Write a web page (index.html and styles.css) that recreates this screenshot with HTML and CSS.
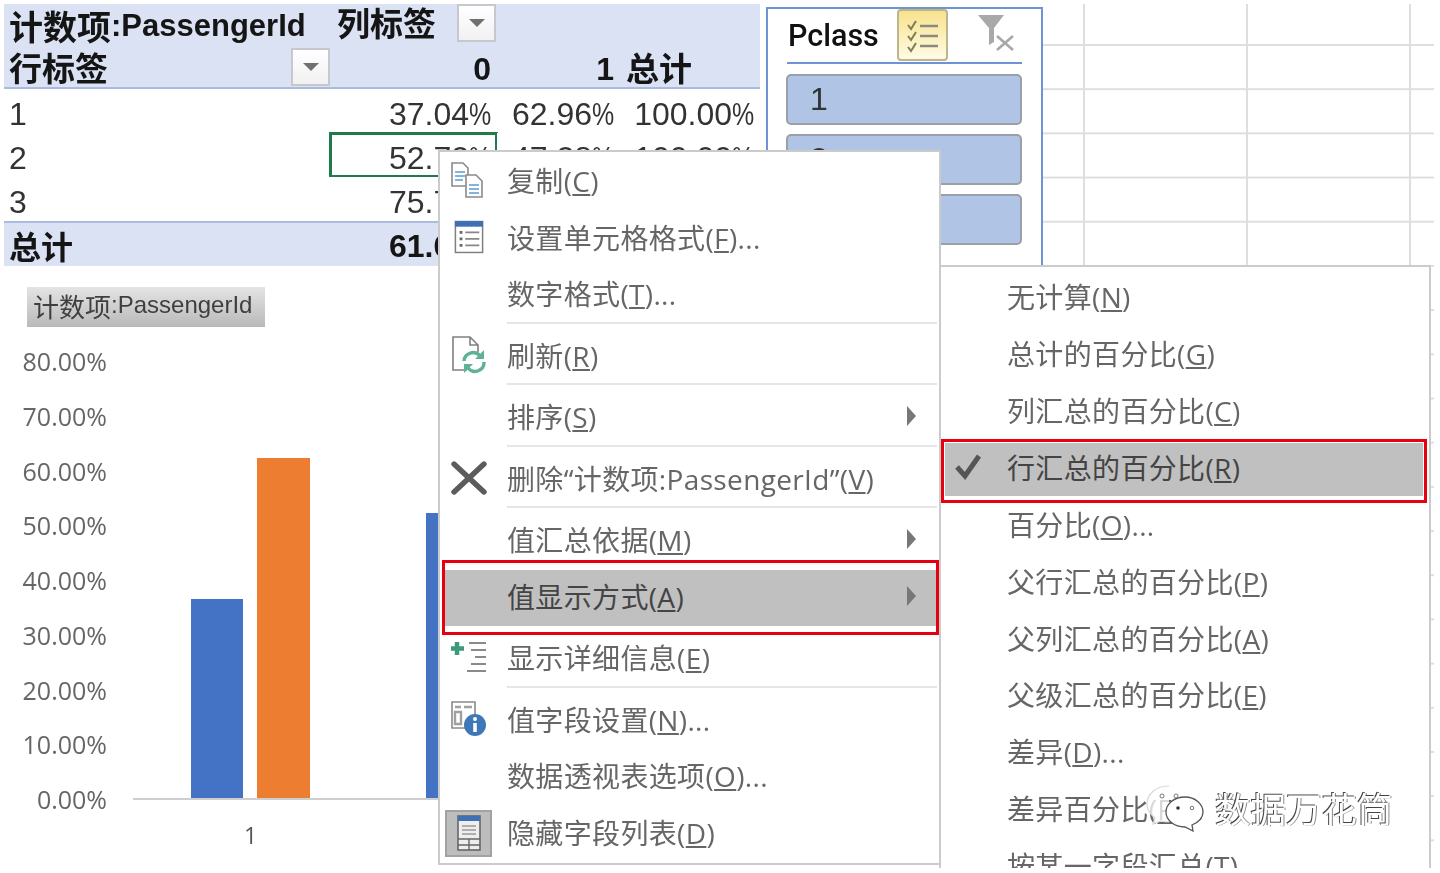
FILE: index.html
```html
<!DOCTYPE html>
<html lang="zh-CN">
<head>
<meta charset="utf-8">
<title>数据透视表 值显示方式</title>
<link rel="stylesheet" href="styles.css">
</head>
<body>
<div class="stage">
  <div class="left">
    <div class="pivot">
      <div class="cell head field"><span class="cjk34">计数项</span>:PassengerId</div>
      <div class="cell head label-cell"><span>列标签</span><span class="drop"><i></i></span></div>
      <div class="cell head"></div>
      <div class="cell head"></div>

      <div class="cell head label-cell rowlabel"><span>行标签</span><span class="drop"><i></i></span></div>
      <div class="cell head num">0</div>
      <div class="cell head num">1</div>
      <div class="cell head total-h">总计</div>

      <div class="cell data">1</div>
      <div class="cell data num">37.04<span class="pct">%</span></div>
      <div class="cell data num">62.96<span class="pct">%</span></div>
      <div class="cell data num">100.00<span class="pct">%</span></div>

      <div class="cell data">2</div>
      <div class="cell data num selected">52.72<span class="pct">%</span></div>
      <div class="cell data num">47.28<span class="pct">%</span></div>
      <div class="cell data num">100.00<span class="pct">%</span></div>

      <div class="cell data">3</div>
      <div class="cell data num">75.76<span class="pct">%</span></div>
      <div class="cell data num">24.24<span class="pct">%</span></div>
      <div class="cell data num">100.00<span class="pct">%</span></div>

      <div class="cell data sum sum-label">总计</div>
      <div class="cell data sum num">61.62<span class="pct">%</span></div>
      <div class="cell data sum num">38.38<span class="pct">%</span></div>
      <div class="cell data sum num">100.00<span class="pct">%</span></div>
    </div>

    <div class="chart">
      <div class="chart-field"><span class="cjk26">计数项</span>:PassengerId</div>
      <div class="chart-body">
        <div class="y-axis">
          <span>80.00%</span><span>70.00%</span><span>60.00%</span><span>50.00%</span><span>40.00%</span><span>30.00%</span><span>20.00%</span><span>10.00%</span><span>0.00%</span>
        </div>
        <div class="plot-wrap">
          <div class="plot">
            <div class="group">
              <div class="bar blue" style="height:199px"></div>
              <div class="bar orange" style="height:340px"></div>
            </div>
            <div class="group">
              <div class="bar blue" style="height:285px"></div>
              <div class="bar orange" style="height:255px"></div>
            </div>
          </div>
          <div class="cats"><span>1</span><span>2</span></div>
        </div>
      </div>
    </div>
  </div>

  <div class="slicer">
    <div class="slicer-head">
      <span class="slicer-title">Pclass</span>
      <span class="multi">
        <svg width="36" height="36" viewBox="0 0 36 36" fill="none">
          <path d="M3 8l3 4 5-8M3 19l3 4 5-8M3 30l3 4 5-8" stroke="#7d7d58" stroke-width="2"/>
          <path d="M15 9h18M15 19h18M15 29h18" stroke="#8a8a80" stroke-width="2.4"/>
        </svg>
      </span>
      <span class="clear">
        <svg width="40" height="38" viewBox="0 0 40 38" fill="none">
          <path d="M1 1h26L17 14v14l-5 3V14z" fill="#a9a9a9"/>
          <path d="M20 22l16 14M36 22L20 36" stroke="#a8a8a8" stroke-width="2.6"/>
        </svg>
      </span>
    </div>
    <div class="slicer-item">1</div>
    <div class="slicer-item">2</div>
    <div class="slicer-item">3</div>
  </div>

  <div class="cells"></div>

  <div class="menu main-menu">
    <div class="item"><span class="ico">
      <svg width="34" height="36" viewBox="0 0 34 36" fill="none">
        <path d="M1 1h11l5 5v18H1z" fill="#fff" stroke="#8a8a8a" stroke-width="1.6"/>
        <path d="M4 10h10M4 14h10M4 18h8" stroke="#5b9bd5" stroke-width="1.6"/>
        <path d="M15 13h10l6 6v16H15z" fill="#fff" stroke="#8a8a8a" stroke-width="1.6"/>
        <path d="M18 23h10M18 27h10M18 31h10" stroke="#5b9bd5" stroke-width="1.6"/>
      </svg>
    </span><span>复制(<u>C</u>)</span></div>
    <div class="item"><span class="ico">
      <svg class="fmt" width="30" height="36" viewBox="0 0 32 36" fill="none">
        <rect x="1.5" y="1.5" width="29" height="33" fill="#fff" stroke="#808080" stroke-width="1.6"/>
        <rect x="1" y="1" width="30" height="6" fill="#3f6fb5"/>
        <path d="M6 13h3M6 20h3M6 27h3" stroke="#666" stroke-width="3"/>
        <path d="M12 13h15M12 20h15M12 27h15" stroke="#888" stroke-width="1.8"/>
      </svg>
    </span><span>设置单元格格式(<u>F</u>)...</span></div>
    <div class="item"><span class="ico"></span><span>数字格式(<u>T</u>)...</span></div>
    <div class="sep"></div>
    <div class="item"><span class="ico">
      <svg width="36" height="38" viewBox="0 0 36 38" fill="none">
        <path d="M16 34H2V1h17l8 8v7M19 1v8h8" stroke="#808080" stroke-width="1.6"/>
        <path d="M13 25a9 9 0 0 1 16-5l2 2M33 26a9 9 0 0 1-16 6l-2-2" stroke="#5fb295" stroke-width="3.4"/>
        <path d="M33 14v9h-9zM13 37v-9h9z" fill="#5fb295"/>
      </svg>
    </span><span>刷新(<u>R</u>)</span></div>
    <div class="sep"></div>
    <div class="item"><span class="ico"></span><span>排序(<u>S</u>)</span><i class="tri"></i></div>
    <div class="sep"></div>
    <div class="item"><span class="ico">
      <svg width="36" height="34" viewBox="0 0 36 34" fill="none">
        <path d="M3 3l30 28M33 3L3 31" stroke="#5c5c5c" stroke-width="5.4" stroke-linecap="round"/>
      </svg>
    </span><span>删除“计数项:PassengerId”(<u>V</u>)</span></div>
    <div class="sep"></div>
    <div class="item"><span class="ico"></span><span>值汇总依据(<u>M</u>)</span><i class="tri"></i></div>
    <div class="item hot"><span class="ico"></span><span>值显示方式(<u>A</u>)</span><i class="tri"></i></div>
    <div class="sep"></div>
    <div class="item"><span class="ico">
      <svg width="36" height="32" viewBox="0 0 36 32" fill="none">
        <path d="M6 1v13M0 7.500h13" stroke="#3d9a78" stroke-width="4.500"/>
        <path d="M18 2h17M20 9h15M24 16h11M20 23h15M16 30h19" stroke="#8a8a8a" stroke-width="2"/>
      </svg>
    </span><span>显示详细信息(<u>E</u>)</span></div>
    <div class="sep"></div>
    <div class="item"><span class="ico">
      <svg width="36" height="36" viewBox="0 0 36 36" fill="none">
        <path d="M24 22V1H1v26h14" stroke="#8a8a8a" stroke-width="1.6"/>
        <path d="M4 6h6M13 6h8M4 11h6v12H4z" stroke="#a0a0a0" stroke-width="2.4"/>
        <circle cx="24" cy="24" r="11" fill="#3f78b8"/>
        <circle cx="24" cy="18" r="2" fill="#fff"/>
        <path d="M24 22v9" stroke="#fff" stroke-width="3.6"/>
      </svg>
    </span><span>值字段设置(<u>N</u>)...</span></div>
    <div class="item"><span class="ico"></span><span>数据透视表选项(<u>O</u>)...</span></div>
    <div class="item"><span class="ico box">
      <span class="boxed">
        <svg width="24" height="36" viewBox="0 0 24 36" fill="none">
          <rect x="1" y="1" width="22" height="34" fill="#eee" stroke="#666" stroke-width="1.6"/>
          <rect x="1" y="1" width="22" height="5" fill="#3f6fb5"/>
          <path d="M5 11h14M5 15h14M5 19h14" stroke="#999" stroke-width="1.4"/>
          <path d="M1 24h22M1 30h22M12 24v11" stroke="#666" stroke-width="1.4"/>
        </svg>
      </span>
    </span><span>隐藏字段列表(<u>D</u>)</span></div>
  </div>

  <div class="menu sub-menu">
    <div class="sub"><span>无计算(<u>N</u>)</span></div>
    <div class="sub"><span>总计的百分比(<u>G</u>)</span></div>
    <div class="sub"><span>列汇总的百分比(<u>C</u>)</span></div>
    <div class="sub hot-sub">
      <svg class="check" width="28" height="28" viewBox="0 0 28 28" fill="none">
        <path d="M3 15l8 9L25 4" stroke="#555" stroke-width="5"/>
      </svg>
      <span>行汇总的百分比(<u>R</u>)</span>
    </div>
    <div class="sub"><span>百分比(<u>O</u>)...</span></div>
    <div class="sub"><span>父行汇总的百分比(<u>P</u>)</span></div>
    <div class="sub"><span>父列汇总的百分比(<u>A</u>)</span></div>
    <div class="sub"><span>父级汇总的百分比(<u>E</u>)</span></div>
    <div class="sub"><span>差异(<u>D</u>)...</span></div>
    <div class="sub"><span>差异百分比(<u>F</u>)...</span></div>
    <div class="sub"><span>按某一字段汇总(<u>T</u>)...</span></div>
  </div>

  <div class="watermark">
    <svg width="62" height="48" viewBox="0 0 62 48" fill="none">
      <path d="M24 2C11 2 2 10 2 20c0 6 3 10 8 14l-2 6 8-3c2 .6 5 1 8 1" fill="#fff" fill-opacity=".75" stroke="#d8d8d8" stroke-width="1.2"/>
      <circle cx="17" cy="12" r="2" fill="#fff" stroke="#777"/>
      <circle cx="31" cy="12" r="2" fill="#fff" stroke="#777"/>
      <path d="M40 13c-11 0-19 7-19 15s8 15 19 15l8 4-1-6c7-3 11-8 11-13 0-8-8-15-18-15z" fill="#fff" stroke="#555" stroke-width="1.300"/>
      <circle cx="33" cy="24" r="1.800" fill="#333"/>
      <circle cx="47" cy="24" r="1.800" fill="#fff" stroke="#777"/>
    </svg>
    <span class="wm-text">数据万花筒</span>
  </div>
</div>
</body>
</html>
```

FILE: styles.css
```css
* { box-sizing: border-box; }

html, body { margin: 0; padding: 0; background: #fff; }

body {
  padding: 4px 0 0 4px;
  height: 873px;
  overflow: hidden;
  font-family: "Liberation Sans", "Noto Sans CJK SC", sans-serif;
}

.stage {
  position: relative;
  width: 1430px;
  height: 864px;
  overflow: hidden;
  display: grid;
  grid-template-columns: 762px 277px 1fr;
  filter: blur(0.6px);
}

/* pivot table */
.left { display: flex; flex-direction: column; width: 756px; }

.pivot {
  display: grid;
  grid-template-columns: 326px 167px 123px 140px;
  grid-template-rows: 43px 42px 44px 44px 44px 45px;
  font-size: 32px;
  color: #333;
}

.cell { display: flex; align-items: center; padding: 0 6px 0 5px; white-space: nowrap; }
.num { justify-content: flex-end; }

.head { background: #dae2f3; color: #151515; font-weight: 700; }
.head.num { padding-top: 5px; }
.pivot > .cell:nth-child(n+5):nth-child(-n+8) { border-bottom: 2px solid #a9bcdf; }

.field { font-size: 31px; }
.cjk34 { font-size: 34px; }
.label-cell { padding-right: 0; justify-content: space-between; font-size: 33px; align-items: center; }
.rowlabel { padding-right: 0; }
.total-h { font-size: 33px; padding-left: 6px; }

.drop {
  flex: none;
  display: flex;
  align-items: center;
  justify-content: center;
  width: 39px;
  height: 38px;
  background: linear-gradient(#fff, #f1f1f1);
  border: 2px solid #c5c8cf;
}
.drop i {
  width: 0;
  height: 0;
  border-left: 8px solid transparent;
  border-right: 8px solid transparent;
  border-top: 8px solid #707070;
}
.pivot > .label-cell:nth-child(2) { padding-left: 7px; align-items: flex-start; }
.pivot > .label-cell:nth-child(2) span:first-child { line-height: 42px; }
.pivot > .label-cell:nth-child(2) .drop { margin-right: 1px; }

.data { padding-top: 7px; background: #fff; }
.pct { display: inline-block; width: 22px; transform: scaleX(0.78); transform-origin: left center; }

.sum { background: #dae2f3; color: #151515; font-weight: 700; border-top: 2px solid #a9bcdf; padding-top: 3px; }
.sum-label { padding-top: 0; }
.selected { outline: 3px solid #1f7a4d; outline-offset: -2px; }

/* chart */
.chart { display: flex; flex-direction: column; padding-top: 21px; }

.chart-field {
  align-self: flex-start;
  margin-left: 23px;
  width: 238px;
  height: 40px;
  padding: 0 0 4px 6px;
  display: flex;
  align-items: center;
  font-size: 24px;
  color: #3f3f3f;
  background: linear-gradient(#e4e4e4, #b9b9b9);
  white-space: nowrap;
}
.cjk26 { font-size: 26px; }

.chart-body { display: flex; margin-top: 7px; }

.y-axis {
  flex: none;
  width: 103px;
  display: flex;
  flex-direction: column;
  align-items: flex-end;
  font-family: "Open Sans", sans-serif;
  font-size: 25px;
  color: #666;
}
.y-axis span { height: 54.75px; line-height: 54.75px; }

.plot-wrap { margin: 1px 0 0 26px; flex: 1; }

.plot {
  height: 465px;
  display: flex;
  align-items: flex-end;
  gap: 116px;
  padding-left: 58px;
  border-bottom: 2px solid #cfcfcf;
}
.group { display: flex; align-items: flex-end; gap: 14px; }
.bar { width: 52px; }
.blue { background: #4472c4; }
.orange { background: #ed7d31; width: 53px; }

.cats {
  display: flex;
  padding-left: 58px;
  font-family: "Open Sans", sans-serif;
  font-size: 23px;
  color: #555;
}
.cats span { width: 235px; padding-left: 53px; line-height: 70px; }

/* slicer */
.slicer {
  grid-column: 2;
  margin-top: 3px;
  width: 277px;
  height: 262px;
  border: 2px solid #6f94d6;
  padding: 0 19px 0 18px;
  background: #fff;
}

.slicer-head {
  display: flex;
  align-items: center;
  height: 55px;
  border-bottom: 2px solid #6f94d6;
  margin-left: 1px;
}
.slicer-title {
  width: 110px;
  padding-left: 1px;
  font-family: "Roboto", sans-serif;
  font-weight: 500;
  font-size: 30.500px;
  color: #111;
}
.multi {
  width: 51px;
  height: 52px;
  display: flex;
  align-items: center;
  justify-content: center;
  background: linear-gradient(#f8e28c, #fffbe6);
  border: 2px solid #bdb58d;
  border-radius: 4px;
  margin-top: -1px;
}
.clear { margin-left: 29px; margin-top: -6px; display: flex; }

.slicer-item {
  height: 51px;
  margin-top: 9px;
  padding-left: 22px;
  display: flex;
  align-items: center;
  background: #b0c4e6;
  border: 2px solid #9aa0a8;
  border-radius: 5px;
  font-size: 32px;
  color: #333;
}
.slicer-head + .slicer-item { margin-top: 10px; }

/* sheet grid */
.cells {
  grid-column: 3;
  height: 864px;
  background-image:
    linear-gradient(to right, #dedede 2px, transparent 2px),
    linear-gradient(to bottom, #dedede 2px, transparent 2px);
  background-size: 163px 100%, 100% 44.2px;
  background-position: 40px 0, 0 40px;
}

/* context menus */
.menu {
  position: absolute;
  background: #fff;
  border: 2px solid #cbcbcb;
  font-family: "Open Sans", "Noto Sans CJK SC", sans-serif;
  font-size: 28px;
  letter-spacing: 0.35px;
  color: #666;
  white-space: nowrap;
}

.main-menu {
  left: 434px;
  top: 146px;
  width: 503px;
  height: 715px;
  padding-top: 2px;
}

.item {
  position: relative;
  display: flex;
  align-items: center;
  height: 56.5px;
  padding-bottom: 4px;
  margin: 0 2px 0 4px;
}
.ico { flex: none; width: 63px; padding-left: 7px; display: flex; align-items: center; }
.ico.box { padding-left: 1px; margin-top: 3px; }
.fmt { margin-left: 3px; }
.boxed {
  width: 47px;
  height: 47px;
  display: flex;
  align-items: center;
  justify-content: center;
  background: #bdbdbd;
  border: 2px solid #a2a2a2;
}
.tri {
  position: absolute;
  right: 21px;
  top: 50%;
  margin-top: -12px;
  border-top: 10px solid transparent;
  border-bottom: 10px solid transparent;
  border-left: 9px solid #777;
}

.sep {
  height: 5px;
  margin: -2px 2px 2px 67px;
  background: linear-gradient(#e6e6e6 2px, transparent 2px);
}

.hot { background: #c0c0c0; color: #444; }
.hot::after {
  content: "";
  position: absolute;
  top: -10px;
  bottom: -9px;
  left: -2px;
  right: -2px;
  border: 3px solid #e60012;
}

.sub-menu {
  left: 935px;
  top: 261px;
  width: 492px;
  height: 700px;
  padding-top: 1px;
}
.sub {
  position: relative;
  height: 56.7px;
  display: flex;
  align-items: center;
  padding-left: 62px;
  margin: 0 6px 0 4px;
}
.hot-sub {
  height: 58px;
  padding-bottom: 5px;
  background: #c0c0c0;
  background-clip: padding-box;
  border-top: 5px solid transparent;
  color: #444;
}
.hot-sub::after {
  content: "";
  position: absolute;
  top: -4px;
  bottom: -7px;
  left: -4px;
  right: -4px;
  border: 3px solid #e60012;
}
.check { position: absolute; left: 9px; top: 9px; }

/* watermark */
.watermark {
  position: absolute;
  left: 1141px;
  top: 778px;
  display: flex;
  align-items: center;
  gap: 8px;
}
.wm-text {
  font-family: "Noto Sans CJK SC", sans-serif;
  font-size: 35.500px;
  color: #fff;
  text-shadow: -1px -1px 0 #444, 1px 0 0 #888;
  white-space: nowrap;
}
```
